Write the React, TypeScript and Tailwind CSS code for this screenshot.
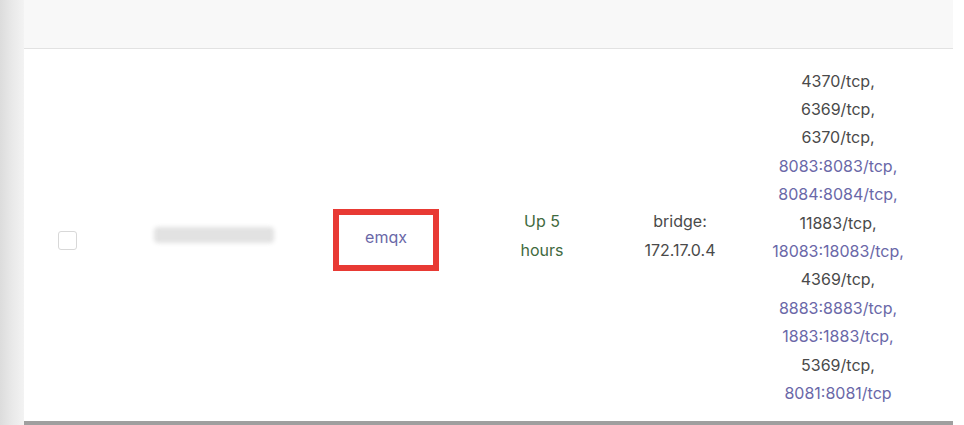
const PORTS: { text: string; mapped: boolean }[] = [
  { text: '4370/tcp,', mapped: false },
  { text: '6369/tcp,', mapped: false },
  { text: '6370/tcp,', mapped: false },
  { text: '8083:8083/tcp,', mapped: true },
  { text: '8084:8084/tcp,', mapped: true },
  { text: '11883/tcp,', mapped: false },
  { text: '18083:18083/tcp,', mapped: true },
  { text: '4369/tcp,', mapped: false },
  { text: '8883:8883/tcp,', mapped: true },
  { text: '1883:1883/tcp,', mapped: true },
  { text: '5369/tcp,', mapped: false },
  { text: '8081:8081/tcp', mapped: true },
];

export default function App() {
  return (
    <div
      className="flex h-[425px] w-[964px] overflow-hidden bg-white text-[16px] text-[#4a4a4a]"
      style={{ fontFamily: 'Inter, "Noto Sans", sans-serif' }}
    >
      {/* sidebar edge */}
      <div className="h-full w-[24px] shrink-0 bg-gradient-to-r from-[#dcdcdc] via-[#e9e9e9] to-[#f3f3f3]" />

      <div className="flex w-[929px] shrink-0 flex-col">
        {/* header */}
        <div className="h-[49px] shrink-0 border-b border-[#e2e2e2] bg-[#f8f8f8]" />

        {/* row */}
        <div className="flex flex-1 items-center border-b-4 border-[#9f9f9f] bg-white">
          <div className="flex w-[86px] justify-center pt-[10px]">
            <div className="h-[19px] w-[19px] rounded-[3px] border border-[#d8d8d8] bg-white" />
          </div>
          <div className="flex w-[200px] justify-center pl-[8px]">
            <div className="h-[16px] w-[120px] rounded-sm bg-[#e2e2e2] blur-[2px]" />
          </div>
          <div className="flex w-[152px] justify-center pt-[10px]">
            <div className="flex h-[62px] w-[106px] items-center justify-center border-[6px] border-[#e83a34] pb-[6px] text-[#6a68a8]">
              emqx
            </div>
          </div>
          <div className="flex w-[160px] flex-col items-center pt-[2px] leading-[29px] text-[#3f6a40]">
            <span>Up 5</span>
            <span>hours</span>
          </div>
          <div className="flex w-[116px] flex-col items-center pt-[2px] leading-[29px]">
            <span>bridge:</span>
            <span>172.17.0.4</span>
          </div>
          <div className="flex w-[200px] flex-col items-center pt-[4px] leading-[28.4px]">
            {PORTS.map((p) => (
              <span key={p.text} className={p.mapped ? 'text-[#6a68a8]' : ''}>
                {p.text}
              </span>
            ))}
          </div>
        </div>
      </div>

      <div className="h-full flex-1 bg-white" />
    </div>
  );
}
